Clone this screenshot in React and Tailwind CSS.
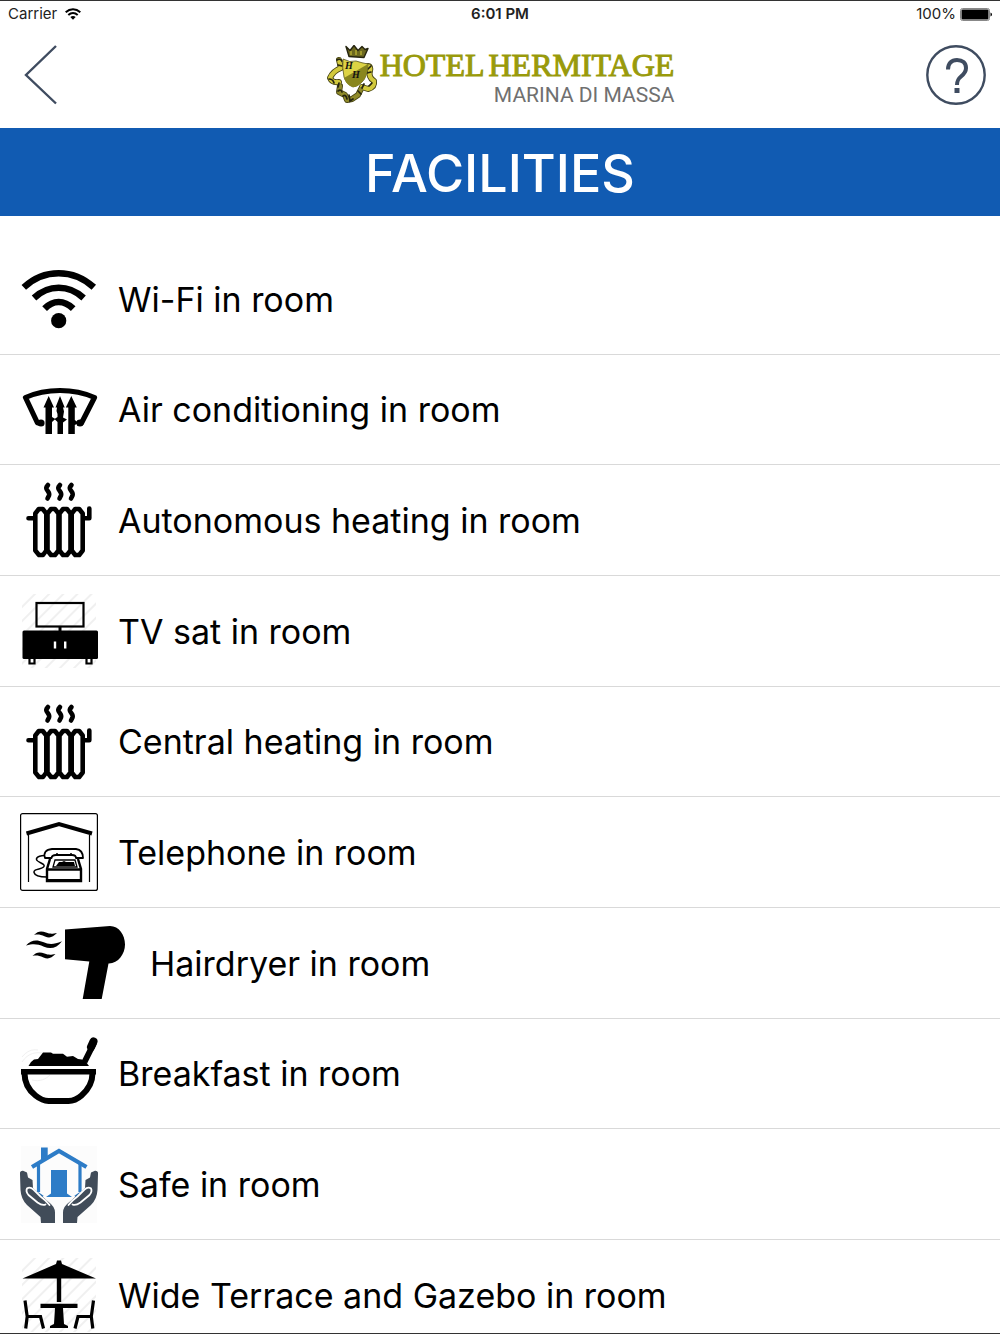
import React from "react";

function Hatch({ id }) {
  return (
    <>
      <defs>
        <pattern id={id} width="10" height="10" patternUnits="userSpaceOnUse" patternTransform="rotate(45)">
          <path d="M2 0v10" stroke="#f0f0f0" strokeWidth="2" />
        </pattern>
      </defs>
      <rect x="2" y="2" width="74" height="74" fill={`url(#${id})`} stroke="none" />
    </>
  );
}

function Icon({ wide, children }) {
  return (
    <svg
      viewBox={wide ? "0 0 110 78" : "0 0 78 78"}
      className={wide ? "h-[78px] w-[110px] shrink-0" : "size-[78px] shrink-0"}
      fill="none"
      stroke="#000"
      aria-hidden="true"
    >
      {children}
    </svg>
  );
}

function WifiIcon() {
  return (
    <Icon>
      <g strokeWidth="6.6">
        <path d="M3.8 27.3Q19 13.2 38.7 13.2T73.8 27.3" />
        <path d="M14 38Q25 27.8 38.7 27.8T63.6 38" />
        <path d="M24.6 48.6Q31 42 38.7 42T53.2 48.6" />
      </g>
      <circle cx="38.7" cy="60.7" r="7.6" fill="#000" stroke="none" />
    </Icon>
  );
}

function AirIcon() {
  return (
    <Icon>
      <path d="M19 52H17.500L5.500 26.500Q21 19.500 40 19.500t34.500 7L61.500 52H57" strokeWidth="5.200" strokeLinejoin="round" />
      <circle cx="21" cy="52" r="3.600" fill="#000" stroke="none" />
      <circle cx="60" cy="52" r="3.600" fill="#000" stroke="none" />
      <g fill="#000" stroke="none">
        <path d="M28.700 25l5.300 11.500h-2V46l3.300 2-3.300 3V63h-6.500V36.500h-2z" />
        <path d="M40 25l4.700 11.500H43l1 4-1 6 4 2-4 3V63h-5.500V51l-3-3 3-2V43l-1-3 .5-3.500H35.500z" />
        <path d="M51.300 25l5.500 11.500h-2V49l4 3-4 2V63h-6.500V36.500h-2.500z" />
      </g>
    </Icon>
  );
}

function RadiatorIcon() {
  return (
    <Icon>
      <g strokeWidth="4.600" strokeLinejoin="round" strokeLinecap="round">
        <path d="M28 4l-1.500 2c-1.500 3 4 5 2.500 8.500l-1.500 3M40 4l-1.500 2c-1.500 3 4 5 2.500 8.500l-1.500 3M51.500 4L50 6c-1.500 3 4 5 2.500 8.500l-1.500 3" />
        <path d="M8.500 37.200H14M64 37.200h5.300V27.500" />
        <path d="M15.300 32.500l3.500-4.500h4l3.500 4.500V69.500L23 74h-4l-3.700-4.500z" />
        <path d="M27.500 32.500l3.500-4.500h4l3.500 4.500V69.500L35 74h-4l-3.500-4.500z" />
        <path d="M39.500 32.500l3.500-4.500h4l3.500 4.500V69.500L47 74h-4l-3.500-4.500z" />
        <path d="M51.700 32.500l3.500-4.500h4l3.500 4.500V69.500L59.200 74h-4l-3.500-4.500z" />
      </g>
    </Icon>
  );
}

function TvIcon() {
  return (
    <Icon>
      <Hatch id="tv-hatch" />
      <rect x="16.500" y="11" width="47" height="23.500" strokeWidth="2.200" />
      <path d="M40 34v6" strokeWidth="3" />
      <rect x="2.500" y="38.500" width="75.500" height="28.500" rx="1.500" fill="#000" stroke="none" />
      <path d="M35 49.500v7M45.200 49.500v7" stroke="#fff" strokeWidth="2.400" />
      <path d="M9.500 66v5.500h5V66M66.500 66v5.500h5V66" strokeWidth="2.200" />
    </Icon>
  );
}

function TelephoneIcon() {
  return (
    <Icon>
      <rect x="0.600" y="0.600" width="76.800" height="76.800" rx="2" strokeWidth="1.200" />
      <path d="M6.500 20.500L39 11l33 9.500" strokeWidth="4" />
      <path d="M8.500 22v47M69.500 22v47" strokeWidth="1.200" />
      <path d="M26 42.500c-4-.5-10 1-9.500 4s9 4 7.500 7-11 2-10 6 7 4.500 13 4.500" strokeWidth="1.500" />
      <path d="M30 46l-3 10v12h34V56l-3-10M27 56.500h34" strokeWidth="2.400" />
      <path d="M28 67.200h33" strokeWidth="2.600" />
      <path d="M25 45q-2.500-8 7-9h24q7 1 7 9h-7q0-3-4-3H36q-4 0-4.500 3z" fill="#fff" strokeWidth="1.800" strokeLinejoin="round" />
      <path d="M35 47h20l2 7H33z" strokeWidth="1.300" />
      <path d="M36 53l3-4h3l2-1 2 1h8l1 4z" fill="#000" stroke="none" />
      <path d="M37 40v3M51 40v3" strokeWidth="1.500" />
    </Icon>
  );
}

function HairdryerIcon() {
  return (
    <Icon wide>
      <g fill="#000" stroke="none">
        <path d="M45 5.500L90 2C99 2 105 11 105 20.500S98 39.800 88.500 39.500L81.700 75h-19l6.600-37.500L45 35.300z" />
        <path d="M6 21.500c5-6 11-6 17-3.500s10 3 19-.8c-5 6.500-11 8.500-18 5.500s-11-3-18-1.200z" />
        <path d="M14 11c4-4.500 8-4 12-2.500s6 1.500 11 .5c-4 4-7 5.500-12 3.500s-7-2.500-11-1.500z" />
        <path d="M12.500 32c4-4.500 8-4 12-2.500s6 1.500 11 .5c-4 4-7 5.500-12 3.500s-7-2.500-11-1.500z" />
      </g>
    </Icon>
  );
}

function BreakfastIcon() {
  return (
    <Icon>
      <path d="M2 27c6-9 14-11 24-8M2 22c5-6 10-8 16-7M12 45c8 2 14-1 18-5" stroke="#f0f0f0" />
      <path d="M8.500 31l2.500-4 3-2.500 4-.5 5-6.500h8l2 1.200h10l4 3 6-.8 5 3 4 .5 4 2.500L69 31z" fill="#000" stroke="none" />
      <path d="M64.500 27L74 8" strokeWidth="6" />
      <path d="M71 12l2.500-5.500" strokeWidth="8" strokeLinecap="round" />
      <path d="M1 34h75v5.500H1z" fill="#000" stroke="none" />
      <path d="M4.500 38c0 9 4 17 11 22.500 5 4 8 5.500 13 5.500h20c5 0 9-2 13-5.500C69 54 72.500 47 72.500 38" strokeWidth="6" />
    </Icon>
  );
}

function Hand() {
  return (
    <>
      <path
        d="M0 29q-.5-3.500 3-3.300L7 27.500l1 5 4.500 2.500.5 8 15 13.500q7 5 7 11V78H21l-.5-6L7 60Q1 54 .5 45z"
        fill="#414c59"
        stroke="none"
      />
      <path d="M7 43.500q3-2 6.500 1l7 7q5 3.500 9 8.500M7 43.500q-1.500 3 1.500 6.500l9 7.500q5 3.500 8 2" stroke="#fff" strokeWidth="1.800" strokeLinecap="round" />
    </>
  );
}

function SafeIcon() {
  return (
    <Icon>
      <rect x="1" y="1" width="76" height="77" fill="#fcfcfc" stroke="none" />
      <g stroke="#2d7cc7">
        <path d="M12 22L39 6l27.500 16" strokeWidth="4.200" />
        <path d="M18.500 19v28M60 19v28" strokeWidth="3.200" />
        <path d="M21 2.500h6.700V11L21 15zM31 25h16v23.500l5 3.500H26l5-3.500z" fill="#2d7cc7" stroke="none" />
        <path d="M18 48l5 3.500M60 48l-5 3.500" strokeWidth="2" />
      </g>
      <Hand />
      <g transform="matrix(-1 0 0 1 78 0)">
        <Hand />
      </g>
    </Icon>
  );
}

function TerraceIcon() {
  return (
    <Icon>
      <Hatch id="terrace-hatch" />
      <path d="M2.500 22.500L36 8l1-3.500h4L42 8l34 14.500z" fill="#000" stroke="none" />
      <path d="M39 20v26" strokeWidth="4.400" />
      <path d="M20.500 47.700h37V52H43l1 16 4 2v2H30v-2l4-2 1-16H20.500z" fill="#000" stroke="none" />
      <path d="M5 44.500l2.200 16-1.500 12M7 60.500h13.500l3 12M73.500 44.500l-2.200 16 1.500 12M71.500 60.500H58l-3 12" strokeWidth="3.200" />
    </Icon>
  );
}

function Crest() {
  return (
    <svg viewBox="0 0 54 60" className="h-[60px] w-[54px] shrink-0" fill="none" aria-hidden="true">
      <g stroke="#4a4715" strokeWidth="6" strokeLinecap="round" strokeLinejoin="round">
        <path d="M13 15l2 8q-8 3-11 10 2 5 9 4M42 21q3 0 2 5-2 6 4 10 1 6-6 8l-6-2" />
        <path d="M14 41l-1 6 6 3 2 5 5-1 6-4 3-6" />
      </g>
      <g stroke="#d2c93c" strokeWidth="4.200" strokeLinecap="round" strokeLinejoin="round">
        <path d="M13 15l2 8q-8 3-11 10 2 5 9 4M42 21q3 0 2 5-2 6 4 10 1 6-6 8l-6-2" />
        <path d="M14 41l-1 6 6 3 2 5 5-1 6-4 3-6" stroke="#8f8a2a" />
      </g>
      <path d="M11 15q3-2 5 1M12 20l4 1M3 34q4 0 5 4M13 38l-1 4M12 46q3-2 4 1M17 51q3-2 4 3M23 50l1 6 3-2M32 46l3 3M38 39l-2 4M45 21l-3 3M41 28l4-1M46 38l-3 3" stroke="#25240f" strokeWidth="1.700" strokeLinecap="round" />
      <path d="M17 14q7 4 13 2 6 2 12 3-1 14-6 18-5 5-9 5-7-3-9-10-2-9-1-18z" fill="#ddd344" stroke="#55521b" strokeWidth=".8" />
      <path d="M42 19L18 33q3 8 9 9 5 0 9-5 5-4 6-18z" fill="#89861d" />
      <path d="M20 1.500l4 4 4-5 4 5 4-4 3 3 3-1-4 9-15-1z" fill="#6c681f" stroke="#25240f" strokeWidth="1.400" strokeLinejoin="round" />
      <path d="M25 6v4M30 5v5M35 6v4" stroke="#d5cb3a" strokeWidth="1" />
      <text x="19" y="24" fontFamily="Liberation Serif, serif" fontSize="10" fontWeight="bold" fontStyle="italic" fill="#111">H</text>
      <text x="26" y="33" fontFamily="Liberation Serif, serif" fontSize="10" fontWeight="bold" fontStyle="italic" fill="#111">H</text>
    </svg>
  );
}

const FACILITIES = [
  ["Wi-Fi in room", WifiIcon],
  ["Air conditioning in room", AirIcon],
  ["Autonomous heating in room", RadiatorIcon],
  ["TV sat in room", TvIcon],
  ["Central heating in room", RadiatorIcon],
  ["Telephone in room", TelephoneIcon],
  ["Hairdryer in room", HairdryerIcon],
  ["Breakfast in room", BreakfastIcon],
  ["Safe in room", SafeIcon],
  ["Wide Terrace and Gazebo in room", TerraceIcon],
];

function StatusBar() {
  return (
    <div className="grid h-[26px] shrink-0 grid-cols-3 items-center px-2 text-[15px] text-[#222]">
      <div className="flex items-center gap-2">
        <span>Carrier</span>
        <svg viewBox="0 0 16 12" className="h-3 w-4" fill="none" stroke="#000" strokeWidth="2" aria-hidden="true">
          <path d="M.7 4.200Q4 1.200 8 1.200t7.300 3M3.300 7Q5.500 5 8 5t4.700 2" />
          <path d="M5.300 9Q8 7 10.700 9L8 11.700z" fill="#000" stroke="none" />
        </svg>
      </div>
      <span className="text-center font-semibold">6:01 PM</span>
      <div className="flex items-center justify-end gap-1">
        <span>100%</span>
        <svg viewBox="0 0 32 13" className="h-[13px] w-8" aria-hidden="true">
          <rect x=".5" y=".5" width="29" height="12" rx="2" fill="#fff" stroke="#888" />
          <rect x="1.500" y="1.500" width="27" height="10" rx="1" fill="#000" />
          <path d="M30.500 4.500q1.500.5 1.500 2t-1.500 2z" fill="#000" />
        </svg>
      </div>
    </div>
  );
}

export default function App() {
  return (
    <div className="flex h-screen flex-col overflow-hidden border-y border-[#333] bg-white font-['Inter',sans-serif] text-black">
      <StatusBar />
      <header className="flex h-[101px] shrink-0 items-center justify-between px-[13px] pb-[6px]">
        <button type="button" aria-label="Back" className="flex w-[62px] pl-[11px]">
          <svg viewBox="0 0 34 60" className="h-[60px] w-[34px]" fill="none" stroke="#3f4c60" strokeWidth="2.400" aria-hidden="true">
            <path d="M32 1L2 30l30 28.500" />
          </svg>
        </button>
        <div className="flex items-center">
          <Crest />
          <div className="flex flex-col items-end pt-2">
            <div className="flex gap-1 font-['Liberation_Serif',serif] text-[32px] leading-8 text-[#999a0b] [-webkit-text-stroke:1px_#999a0b]">
              <span>HOTEL</span>
              <span>HERMITAGE</span>
            </div>
            <span className="font-['Roboto',sans-serif] text-[21px] leading-7 text-[#707070]">MARINA DI MASSA</span>
          </div>
        </div>
        <button type="button" aria-label="Help" className="size-[62px]">
          <svg viewBox="0 0 62 62" className="size-[62px]" fill="none" stroke="#3f4c60" aria-hidden="true">
            <circle cx="31" cy="31" r="28.700" strokeWidth="2.400" />
            <path d="M23 25.500c0-6 3.500-9.500 9-9.500s9 3 9 8c0 4-2 6-5 8.500s-4 4-4 8.500" strokeWidth="4" />
            <path d="M29.500 44h5v5h-5z" fill="#3f4c60" stroke="none" />
          </svg>
        </button>
      </header>
      <h1 className="flex h-[88px] shrink-0 items-center justify-center bg-[#115bb2] pt-1 text-[52px] font-medium text-white">
        FACILITIES
      </h1>
      <ul className="mt-7">
        {FACILITIES.map(([label, Glyph]) => (
          <li
            key={label}
            className="flex h-[111px] items-center gap-5 border-b border-[#d9d9d9] pl-5 nth-[3n+2]:h-[110px]"
          >
            <Glyph />
            <span className="text-[34px] whitespace-nowrap">{label}</span>
          </li>
        ))}
      </ul>
    </div>
  );
}
